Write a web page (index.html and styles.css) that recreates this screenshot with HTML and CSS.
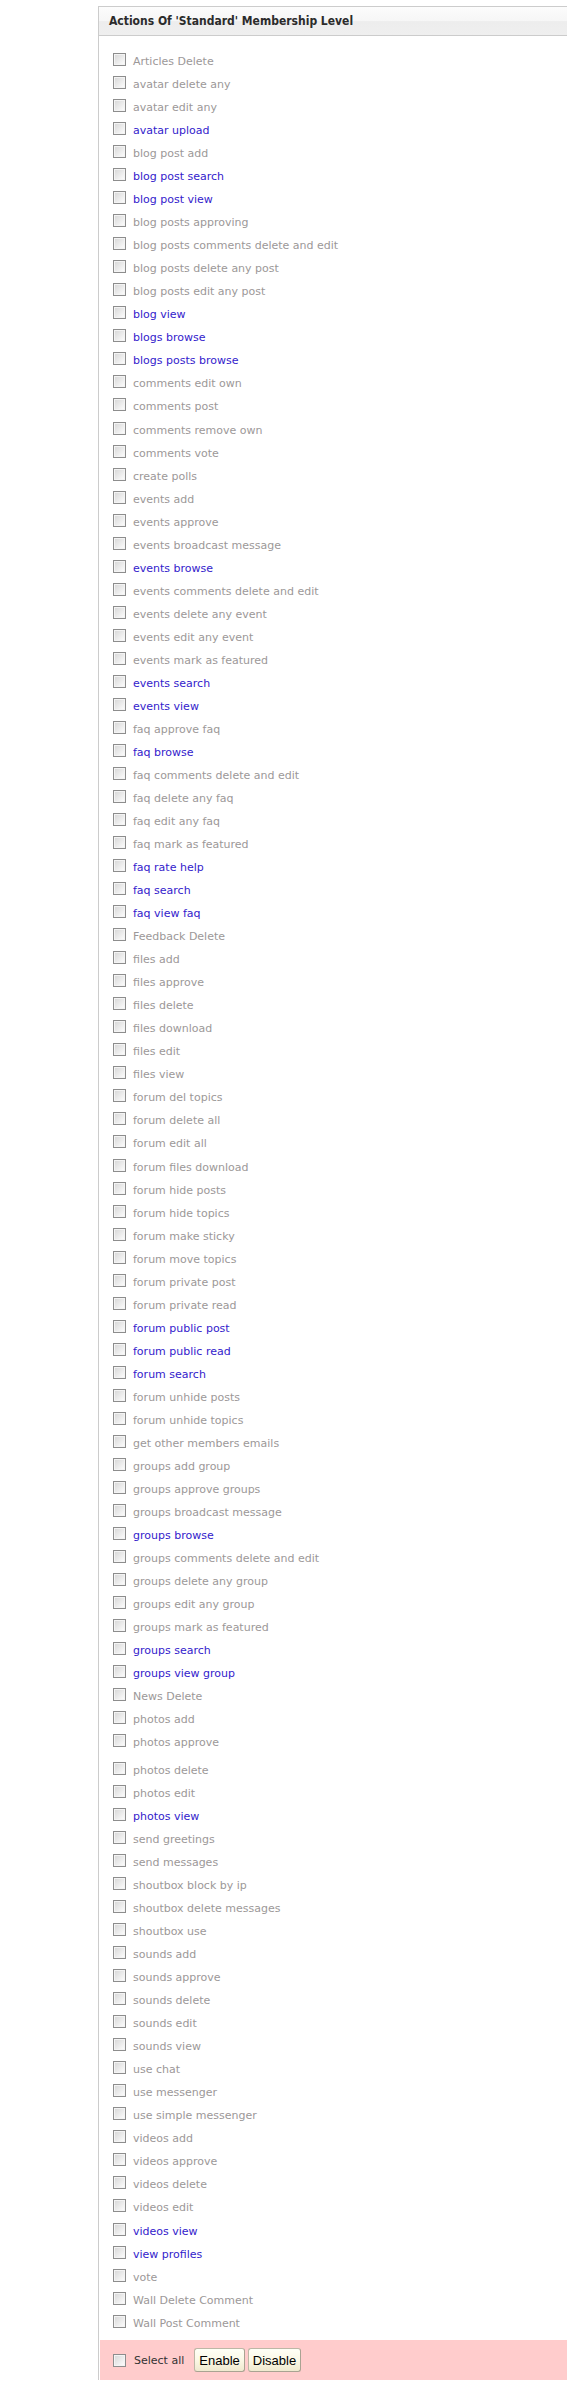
FILE: index.html
```html
<!DOCTYPE html>
<html>
<head>
<meta charset="utf-8">
<title>Actions</title>
<link rel="stylesheet" href="styles.css">
</head>
<body>
<div class="box">
  <div class="box-head">Actions Of 'Standard' Membership Level</div>
  <ul class="actions">
    <li class="row"><input type="checkbox" class="cb"><span class="lbl off">Articles Delete</span></li>
    <li class="row"><input type="checkbox" class="cb"><span class="lbl off">avatar delete any</span></li>
    <li class="row"><input type="checkbox" class="cb"><span class="lbl off">avatar edit any</span></li>
    <li class="row"><input type="checkbox" class="cb"><span class="lbl on">avatar upload</span></li>
    <li class="row"><input type="checkbox" class="cb"><span class="lbl off">blog post add</span></li>
    <li class="row"><input type="checkbox" class="cb"><span class="lbl on">blog post search</span></li>
    <li class="row"><input type="checkbox" class="cb"><span class="lbl on">blog post view</span></li>
    <li class="row"><input type="checkbox" class="cb"><span class="lbl off">blog posts approving</span></li>
    <li class="row"><input type="checkbox" class="cb"><span class="lbl off">blog posts comments delete and edit</span></li>
    <li class="row"><input type="checkbox" class="cb"><span class="lbl off">blog posts delete any post</span></li>
    <li class="row"><input type="checkbox" class="cb"><span class="lbl off">blog posts edit any post</span></li>
    <li class="row"><input type="checkbox" class="cb"><span class="lbl on">blog view</span></li>
    <li class="row"><input type="checkbox" class="cb"><span class="lbl on">blogs browse</span></li>
    <li class="row"><input type="checkbox" class="cb"><span class="lbl on">blogs posts browse</span></li>
    <li class="row"><input type="checkbox" class="cb"><span class="lbl off">comments edit own</span></li>
    <li class="row"><input type="checkbox" class="cb"><span class="lbl off">comments post</span></li>
    <li class="row"><input type="checkbox" class="cb"><span class="lbl off">comments remove own</span></li>
    <li class="row"><input type="checkbox" class="cb"><span class="lbl off">comments vote</span></li>
    <li class="row"><input type="checkbox" class="cb"><span class="lbl off">create polls</span></li>
    <li class="row"><input type="checkbox" class="cb"><span class="lbl off">events add</span></li>
    <li class="row"><input type="checkbox" class="cb"><span class="lbl off">events approve</span></li>
    <li class="row"><input type="checkbox" class="cb"><span class="lbl off">events broadcast message</span></li>
    <li class="row"><input type="checkbox" class="cb"><span class="lbl on">events browse</span></li>
    <li class="row"><input type="checkbox" class="cb"><span class="lbl off">events comments delete and edit</span></li>
    <li class="row"><input type="checkbox" class="cb"><span class="lbl off">events delete any event</span></li>
    <li class="row"><input type="checkbox" class="cb"><span class="lbl off">events edit any event</span></li>
    <li class="row"><input type="checkbox" class="cb"><span class="lbl off">events mark as featured</span></li>
    <li class="row"><input type="checkbox" class="cb"><span class="lbl on">events search</span></li>
    <li class="row"><input type="checkbox" class="cb"><span class="lbl on">events view</span></li>
    <li class="row"><input type="checkbox" class="cb"><span class="lbl off">faq approve faq</span></li>
    <li class="row"><input type="checkbox" class="cb"><span class="lbl on">faq browse</span></li>
    <li class="row"><input type="checkbox" class="cb"><span class="lbl off">faq comments delete and edit</span></li>
    <li class="row"><input type="checkbox" class="cb"><span class="lbl off">faq delete any faq</span></li>
    <li class="row"><input type="checkbox" class="cb"><span class="lbl off">faq edit any faq</span></li>
    <li class="row"><input type="checkbox" class="cb"><span class="lbl off">faq mark as featured</span></li>
    <li class="row"><input type="checkbox" class="cb"><span class="lbl on">faq rate help</span></li>
    <li class="row"><input type="checkbox" class="cb"><span class="lbl on">faq search</span></li>
    <li class="row"><input type="checkbox" class="cb"><span class="lbl on">faq view faq</span></li>
    <li class="row"><input type="checkbox" class="cb"><span class="lbl off">Feedback Delete</span></li>
    <li class="row"><input type="checkbox" class="cb"><span class="lbl off">files add</span></li>
    <li class="row"><input type="checkbox" class="cb"><span class="lbl off">files approve</span></li>
    <li class="row"><input type="checkbox" class="cb"><span class="lbl off">files delete</span></li>
    <li class="row"><input type="checkbox" class="cb"><span class="lbl off">files download</span></li>
    <li class="row"><input type="checkbox" class="cb"><span class="lbl off">files edit</span></li>
    <li class="row"><input type="checkbox" class="cb"><span class="lbl off">files view</span></li>
    <li class="row"><input type="checkbox" class="cb"><span class="lbl off">forum del topics</span></li>
    <li class="row"><input type="checkbox" class="cb"><span class="lbl off">forum delete all</span></li>
    <li class="row"><input type="checkbox" class="cb"><span class="lbl off">forum edit all</span></li>
    <li class="row"><input type="checkbox" class="cb"><span class="lbl off">forum files download</span></li>
    <li class="row"><input type="checkbox" class="cb"><span class="lbl off">forum hide posts</span></li>
    <li class="row"><input type="checkbox" class="cb"><span class="lbl off">forum hide topics</span></li>
    <li class="row"><input type="checkbox" class="cb"><span class="lbl off">forum make sticky</span></li>
    <li class="row"><input type="checkbox" class="cb"><span class="lbl off">forum move topics</span></li>
    <li class="row"><input type="checkbox" class="cb"><span class="lbl off">forum private post</span></li>
    <li class="row"><input type="checkbox" class="cb"><span class="lbl off">forum private read</span></li>
    <li class="row"><input type="checkbox" class="cb"><span class="lbl on">forum public post</span></li>
    <li class="row"><input type="checkbox" class="cb"><span class="lbl on">forum public read</span></li>
    <li class="row"><input type="checkbox" class="cb"><span class="lbl on">forum search</span></li>
    <li class="row"><input type="checkbox" class="cb"><span class="lbl off">forum unhide posts</span></li>
    <li class="row"><input type="checkbox" class="cb"><span class="lbl off">forum unhide topics</span></li>
    <li class="row"><input type="checkbox" class="cb"><span class="lbl off">get other members emails</span></li>
    <li class="row"><input type="checkbox" class="cb"><span class="lbl off">groups add group</span></li>
    <li class="row"><input type="checkbox" class="cb"><span class="lbl off">groups approve groups</span></li>
    <li class="row"><input type="checkbox" class="cb"><span class="lbl off">groups broadcast message</span></li>
    <li class="row"><input type="checkbox" class="cb"><span class="lbl on">groups browse</span></li>
    <li class="row"><input type="checkbox" class="cb"><span class="lbl off">groups comments delete and edit</span></li>
    <li class="row"><input type="checkbox" class="cb"><span class="lbl off">groups delete any group</span></li>
    <li class="row"><input type="checkbox" class="cb"><span class="lbl off">groups edit any group</span></li>
    <li class="row"><input type="checkbox" class="cb"><span class="lbl off">groups mark as featured</span></li>
    <li class="row"><input type="checkbox" class="cb"><span class="lbl on">groups search</span></li>
    <li class="row"><input type="checkbox" class="cb"><span class="lbl on">groups view group</span></li>
    <li class="row"><input type="checkbox" class="cb"><span class="lbl off">News Delete</span></li>
    <li class="row"><input type="checkbox" class="cb"><span class="lbl off">photos add</span></li>
    <li class="row row-tall"><input type="checkbox" class="cb"><span class="lbl off">photos approve</span></li>
    <li class="row"><input type="checkbox" class="cb"><span class="lbl off">photos delete</span></li>
    <li class="row"><input type="checkbox" class="cb"><span class="lbl off">photos edit</span></li>
    <li class="row"><input type="checkbox" class="cb"><span class="lbl on">photos view</span></li>
    <li class="row"><input type="checkbox" class="cb"><span class="lbl off">send greetings</span></li>
    <li class="row"><input type="checkbox" class="cb"><span class="lbl off">send messages</span></li>
    <li class="row"><input type="checkbox" class="cb"><span class="lbl off">shoutbox block by ip</span></li>
    <li class="row"><input type="checkbox" class="cb"><span class="lbl off">shoutbox delete messages</span></li>
    <li class="row"><input type="checkbox" class="cb"><span class="lbl off">shoutbox use</span></li>
    <li class="row"><input type="checkbox" class="cb"><span class="lbl off">sounds add</span></li>
    <li class="row"><input type="checkbox" class="cb"><span class="lbl off">sounds approve</span></li>
    <li class="row"><input type="checkbox" class="cb"><span class="lbl off">sounds delete</span></li>
    <li class="row"><input type="checkbox" class="cb"><span class="lbl off">sounds edit</span></li>
    <li class="row"><input type="checkbox" class="cb"><span class="lbl off">sounds view</span></li>
    <li class="row"><input type="checkbox" class="cb"><span class="lbl off">use chat</span></li>
    <li class="row"><input type="checkbox" class="cb"><span class="lbl off">use messenger</span></li>
    <li class="row"><input type="checkbox" class="cb"><span class="lbl off">use simple messenger</span></li>
    <li class="row"><input type="checkbox" class="cb"><span class="lbl off">videos add</span></li>
    <li class="row"><input type="checkbox" class="cb"><span class="lbl off">videos approve</span></li>
    <li class="row"><input type="checkbox" class="cb"><span class="lbl off">videos delete</span></li>
    <li class="row"><input type="checkbox" class="cb"><span class="lbl off">videos edit</span></li>
    <li class="row"><input type="checkbox" class="cb"><span class="lbl on">videos view</span></li>
    <li class="row"><input type="checkbox" class="cb"><span class="lbl on">view profiles</span></li>
    <li class="row"><input type="checkbox" class="cb"><span class="lbl off">vote</span></li>
    <li class="row"><input type="checkbox" class="cb"><span class="lbl off">Wall Delete Comment</span></li>
    <li class="row"><input type="checkbox" class="cb"><span class="lbl off">Wall Post Comment</span></li>
  </ul>
  <div class="box-foot">
    <input type="checkbox" class="cb">
    <span class="select-all">Select all</span>
    <button class="btn" type="button">Enable</button>
    <button class="btn" type="button">Disable</button>
  </div>
</div>
</body>
</html>
```
FILE: styles.css
```css
html, body {
  margin: 0;
  padding: 0;
  background: #ffffff;
}

body {
  font-family: "DejaVu Sans", Verdana, sans-serif;
  font-size: 11px;
}

.box {
  margin: 6px 0 0 98px;
  border-left: 1px solid #cccccc;
  border-top: 1px solid #cccccc;
}

.box-head {
  height: 28px;
  line-height: 28px;
  padding-left: 10px;
  border-bottom: 1px solid #cccccc;
  background: linear-gradient(#fcfcfc 0%, #f6f6f6 50%, #ededed 52%, #efefef 100%);
  font-family: "DejaVu Sans Condensed", "DejaVu Sans", sans-serif;
  font-weight: bold;
  font-size: 12px;
  color: #2b2b2b;
}

.actions {
  list-style: none;
  margin: 0;
  padding: 12px 0 7.5px 14px;
}

.row {
  display: flex;
  align-items: flex-start;
  height: 23.04px;
}

.row-tall {
  height: 27.6px;
}

.cb {
  -webkit-appearance: none;
  appearance: none;
  box-sizing: border-box;
  width: 13px;
  height: 13px;
  margin: 5px 7px 0 0;
  padding: 0;
  flex: none;
  border: 1px solid #8d8d8d;
  background: linear-gradient(135deg, #d6d6d6 0%, #ececec 55%, #ffffff 100%);
  box-shadow: inset 0 0 0 1px #f4f4f4;
}

.lbl {
  display: block;
  margin-top: 7px;
  line-height: 13px;
  white-space: nowrap;
}

.off {
  color: #9c9898;
}

.on {
  color: #3322cc;
}

.box-foot {
  display: flex;
  align-items: center;
  margin-left: 1px;
  padding: 8px 0 8px 13px;
  background: #ffcccc;
}

.box-foot .cb {
  margin: 0 8px 0 0;
}

.select-all {
  color: #333333;
  margin-right: 10px;
}

.btn {
  box-sizing: border-box;
  height: 24px;
  margin: 0 3px 0 0;
  padding: 0 4px;
  border: 1px solid #bdb7a6;
  border-right-color: #a9a392;
  border-bottom-color: #a9a392;
  border-radius: 3px;
  background: linear-gradient(#fffff6 0%, #fbf8e6 50%, #efe9cf 100%);
  font-family: "Liberation Sans", Arial, sans-serif;
  font-size: 13px;
  color: #000000;
}
```
